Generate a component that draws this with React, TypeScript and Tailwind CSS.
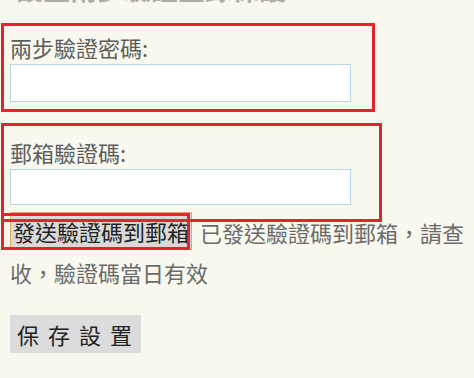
export default function App() {
  const font = { fontFamily: '"Noto Sans CJK TC", "Noto Sans", sans-serif' };

  return (
    <div className="relative min-h-[378px] w-[474px] overflow-hidden bg-[#f9f8ee] pl-[10px]" style={font}>
      {/* heading scrolled off the top, only the feet of the glyphs show */}
      <div className="h-[3px] overflow-hidden pl-[6px]">
        <div className="-translate-y-[25px] whitespace-nowrap text-[27px] font-bold leading-[27px] text-[#aeaea8]">
          設置兩步驗證登錄保護
        </div>
      </div>

      <div className="mt-[28px] text-[22px] leading-[33px] text-[#5c5c5c]">兩步驗證密碼:</div>
      <input
        type="password"
        className="block h-[38px] w-[341px] border border-[#bcd5e2] bg-white px-2 outline-none"
      />

      <div className="mt-[34px] text-[22px] leading-[33px] text-[#5c5c5c]">郵箱驗證碼:</div>
      <input
        type="text"
        className="block h-[36px] w-[341px] border border-[#bcd5e2] bg-white px-2 outline-none"
      />

      <p className="mt-[7px] text-[22px] leading-[40px] text-[#6a6a6a]">
        <button className="inline-block h-[38px] border border-[#e2a95c] bg-[#d9d9d9] px-[2px] align-top text-[22px] leading-[36px] text-[#222]">
          發送驗證碼到郵箱
        </button>
        <span className="ml-[8px]">已發送驗證碼到郵箱，請查收，驗證碼當日有效</span>
      </p>

      <button className="mt-[23px] block h-[38px] bg-[#dcdcdc] pl-[7px] text-[22px] leading-[38px] tracking-[9px] text-[#222]">
        保存設置
      </button>

      {/* red annotation frames */}
      <div className="pointer-events-none absolute left-[1px] top-[23px] h-[89px] w-[374px] border-[3px] border-[#e0252e]" />
      <div className="pointer-events-none absolute left-[1px] top-[123px] h-[99px] w-[381px] border-[3px] border-[#e0252e]" />
      <div className="pointer-events-none absolute left-[1px] top-[213px] h-[37px] w-[189px] border-[3px] border-[#e0252e]" />
    </div>
  );
}
